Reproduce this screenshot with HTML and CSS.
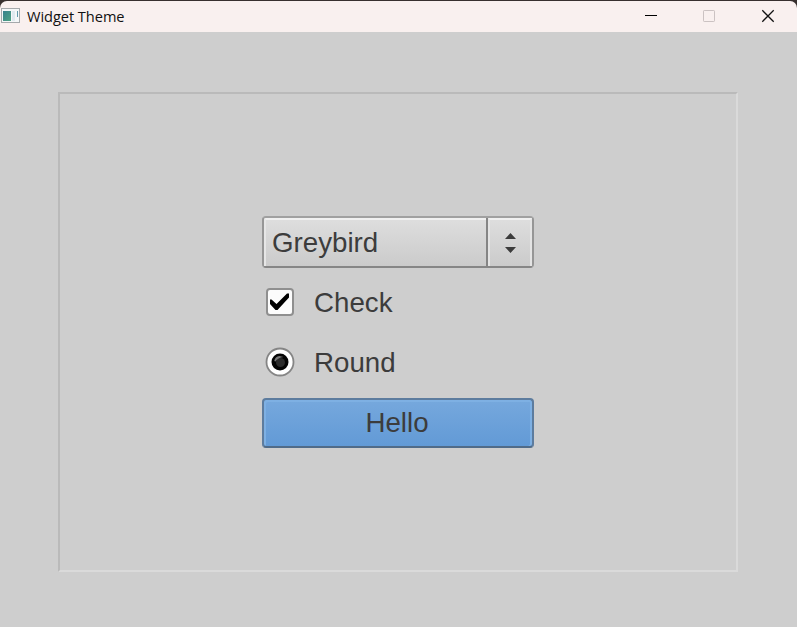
FILE: index.html
```html
<!DOCTYPE html>
<html lang="en">
<head>
<meta charset="utf-8">
<title>Widget Theme</title>
<link rel="stylesheet" href="styles.css">
</head>
<body>
<div class="window">
  <header class="titlebar">
    <svg class="app-icon" width="20" height="16" viewBox="0 0 20 16">
      <defs><linearGradient id="app" x1="0" y1="0" x2="1" y2="1"><stop offset="0" stop-color="#37808c"/><stop offset="1" stop-color="#4fa383"/></linearGradient></defs>
      <rect x="1.5" y=".5" width="18" height="14" fill="#f4f7f8" stroke="#a5a9ac"/>
      <rect x="3" y="3" width="8" height="10" fill="url(#app)"/>
      <rect x="12" y="3" width="3" height="10" fill="#dfe9ef"/>
      <rect x="17" y="3" width="1" height="6" fill="#629bad"/>
    </svg>
    <h1 class="title">Widget Theme</h1>
    <div class="controls">
      <svg width="14" height="14" viewBox="0 0 14 14"><path d="M1 6.500H13" stroke="#000"/></svg>
      <svg width="14" height="14" viewBox="0 0 14 14"><rect x="1.5" y="1.5" width="11" height="11" rx=".7" fill="none" stroke="#cbc2c2"/></svg>
      <svg width="14" height="14" viewBox="0 0 14 14"><path d="M1.3 1.3 12.7 12.7M12.7 1.3 1.3 12.7" stroke="#111" stroke-width="1.25"/></svg>
    </div>
  </header>
  <main class="content">
    <section class="frame">
      <div class="combo">
        <span class="combo-text">Greybird</span>
        <span class="combo-arrows"><svg width="14" height="20" viewBox="0 0 14 20"><path d="M2 6 7.500 0 13 6zM2 14h11l-5.500 6z" fill="#3c3c3c"/></svg></span>
      </div>
      <div class="option">
        <svg width="28" height="28" viewBox="0 0 28 28"><rect x="1" y="1" width="26" height="26" rx="3" fill="#fcfcfc" stroke="#8f8f8f" stroke-width="2"/><path d="M4 11.500H5.500L10.500 16 21 5.500H23V9.500L11.500 22H9.500L4 16z" fill="#000"/></svg>
        <span class="label">Check</span>
      </div>
      <div class="option">
        <svg class="radio" width="28" height="28" viewBox="0 0 28 28"><circle cx="14" cy="14" r="13.5" fill="#fff" stroke="#858585" stroke-width="1.800"/><circle cx="14" cy="14" r="8.500" fill="#050505"/><circle cx="14.500" cy="14.500" r="4.500" fill="#2c2c2c"/><path d="M8.300 13Q9 8.500 13.500 8L17.500 9Q12 9.500 9.500 13.500z" fill="#777"/></svg>
        <span class="label">Round</span>
      </div>
      <div class="button">Hello</div>
    </section>
  </main>
</div>
</body>
</html>
```

FILE: styles.css
```css
* { box-sizing: border-box; }
body { margin: 0; background: #38302f; }
.window {
  display: flex;
  flex-direction: column;
  width: 797px;
  height: 627px;
  padding-top: 1px;
  font-family: "Liberation Sans", Arial, sans-serif;
}
.titlebar {
  display: flex;
  align-items: center;
  flex: 0 0 31px;
  background: #f9f0ef;
  border-radius: 7px 7px 0 0;
}
.app-icon { margin-bottom: 1px; }
.title {
  margin: 0 0 2px 7px;
  font: 400 14.6px/20px "Open Sans", "Noto Sans", sans-serif;
  letter-spacing: -.05px;
  color: #111;
}
.controls {
  display: flex;
  gap: 44px;
  margin: 0 22px 1px auto;
}
.controls svg:last-child { margin-left: 1px; }
.content {
  flex: 1;
  padding: 60px 59px 55px 58px;
  background: #cecece;
}
.frame {
  display: flex;
  flex-direction: column;
  width: 680px;
  height: 480px;
  padding: 122px 202px;
  border: 2px solid;
  border-color: #bababa #dadada #dadada #bababa;
  font-size: 27.7px;
  color: #3c3c3c;
}
.combo {
  display: flex;
  height: 52px;
  border: 2px solid #969696;
  border-top-color: #a0a0a0;
  border-bottom-color: #868686;
  border-radius: 4px;
  background: linear-gradient(#dedede, #cbcbcb);
}
.combo-text {
  flex: 1;
  padding-left: 6px;
  border: solid #e6e6e6;
  border-top-color: #f0f0f0;
  border-width: 2px 0 0 2px;
  border-radius: 2px 0 0;
  line-height: 46px;
}
.combo-arrows {
  display: flex;
  align-items: center;
  justify-content: center;
  width: 44px;
  border: solid #e4e4e4;
  border-top-color: #f0f0f0;
  border-width: 2px 2px 0 2px;
  box-shadow: -2px 0 #858585;
}
.option {
  display: flex;
  align-items: center;
  gap: 20px;
  height: 60px;
  padding-left: 4px;
}
.radio { overflow: visible; }
.label { padding-top: 1px; }
.combo + .option { margin-top: 4px; }
.button {
  height: 50px;
  margin-top: 6px;
  border: 2px solid #5d7c9e;
  border-bottom-color: #506b88;
  border-radius: 4px;
  box-shadow: inset 2px 2px #7eb0e3, inset -2px 0 #7eb0e3;
  background: linear-gradient(#76a8dd, #629ad6);
  line-height: 46px;
  text-align: center;
  text-indent: -2px;
}
```
